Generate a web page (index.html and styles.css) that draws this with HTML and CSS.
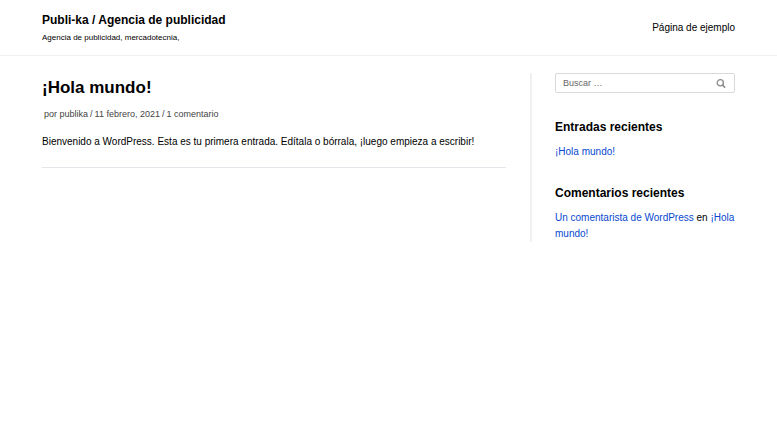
FILE: index.html
```html
<!DOCTYPE html>
<html lang="es">

<head>
    <meta charset="UTF-8">
    <meta name="viewport" content="width=device-width, initial-scale=1.0">
    <title>Publi-ka / Agencia de publicidad</title>
    <link rel="stylesheet" href="styles.css">
</head>

<body>
    <header class="header">
        <div class="brand">
            <a class="site-title" href="#">Publi-ka / Agencia de publicidad</a>
            <p class="tagline">Agencia de publicidad, mercadotecnia,</p>
        </div>
        <nav>
            <a class="nav-link" href="#">Página de ejemplo</a>
        </nav>
    </header>

    <div class="container">
        <main class="content">
            <article class="post">
                <h1 class="post-title"><a href="#">¡Hola mundo!</a></h1>
                <ul class="meta">
                    <li>por <a href="#">publika</a></li>
                    <li>11 febrero, 2021</li>
                    <li><a href="#">1 comentario</a></li>
                </ul>
                <p class="excerpt">Bienvenido a WordPress. Esta es tu primera entrada. Edítala o bórrala, ¡luego empieza a escribir!</p>
            </article>
        </main>

        <aside class="sidebar">
            <form class="search">
                <input class="search-field" type="search" placeholder="Buscar …" aria-label="Buscar">
                <button class="search-button" type="submit" aria-label="Buscar">
                    <svg width="10" height="10" viewBox="0 0 10 10" fill="none" stroke="#8a8a8a">
                        <circle cx="4.3" cy="4.8" r="3.1" stroke-width="1.3" />
                        <path d="M6.8 7.3L8.6 9.1" stroke-width="1.6" stroke-linecap="round" />
                    </svg>
                </button>
            </form>

            <section class="widget">
                <h2 class="widget-title">Entradas recientes</h2>
                <ul class="widget-list">
                    <li><a href="#">¡Hola mundo!</a></li>
                </ul>
            </section>

            <section class="widget">
                <h2 class="widget-title">Comentarios recientes</h2>
                <ul class="widget-list">
                    <li><a href="#">Un comentarista de WordPress</a> en <a href="#">¡Hola mundo!</a></li>
                </ul>
            </section>
        </aside>
    </div>
</body>

</html>
```

FILE: styles.css
```css
* {
    box-sizing: border-box;
}

body {
    margin: 0;
    background-color: #fff;
    color: #000;
    font-family: "Liberation Sans", Arial, sans-serif;
    font-size: 10px;
    line-height: 16px;
}

h1,
h2,
p,
ul {
    margin: 0;
    padding: 0;
}

ul {
    list-style: none;
}

a {
    color: inherit;
    text-decoration: none;
}

.header {
    display: flex;
    justify-content: space-between;
    align-items: center;
    padding: 10px 42px;
    border-bottom: 1px solid #f2f2f2;
}

.site-title {
    display: block;
    font-size: 12px;
    font-weight: bold;
    line-height: 20px;
}

.tagline {
    font-size: 8px;
    line-height: 15px;
}

.container {
    display: flex;
    gap: 24px;
    padding: 17px 42px;
}

.content {
    flex: 1;
}

.post {
    padding-bottom: 17px;
    border-bottom: 1px solid #e4e4ea;
}

.post-title {
    font-size: 17px;
    line-height: 30px;
}

.meta {
    display: flex;
    margin: 3px 0 12px;
    padding-left: 2px;
    color: #444;
    font-size: 9px;
}

.meta li + li::before {
    content: "/";
    padding: 0 2px;
}

.sidebar {
    width: 205px;
    padding-left: 23px;
    border-left: 2px solid #f0f0f0;
}

.search {
    display: flex;
    align-items: center;
    height: 20px;
    margin-bottom: 24px;
    border: 1px solid #d9d9d9;
    border-radius: 2px;
}

.search-field {
    flex: 1;
    min-width: 0;
    padding: 0 7px;
    border: 0;
    outline: 0;
    background: none;
    color: #000;
    font: inherit;
    font-size: 9px;
}

.search-field::placeholder {
    color: #666;
}

.search-button {
    display: flex;
    padding: 0 8px;
    border: 0;
    background: none;
    cursor: pointer;
}

.widget + .widget {
    margin-top: 23px;
}

.widget-title {
    margin-bottom: 7px;
    font-size: 12px;
    line-height: 20px;
}

.widget-list a {
    color: #0648d0;
}
```
